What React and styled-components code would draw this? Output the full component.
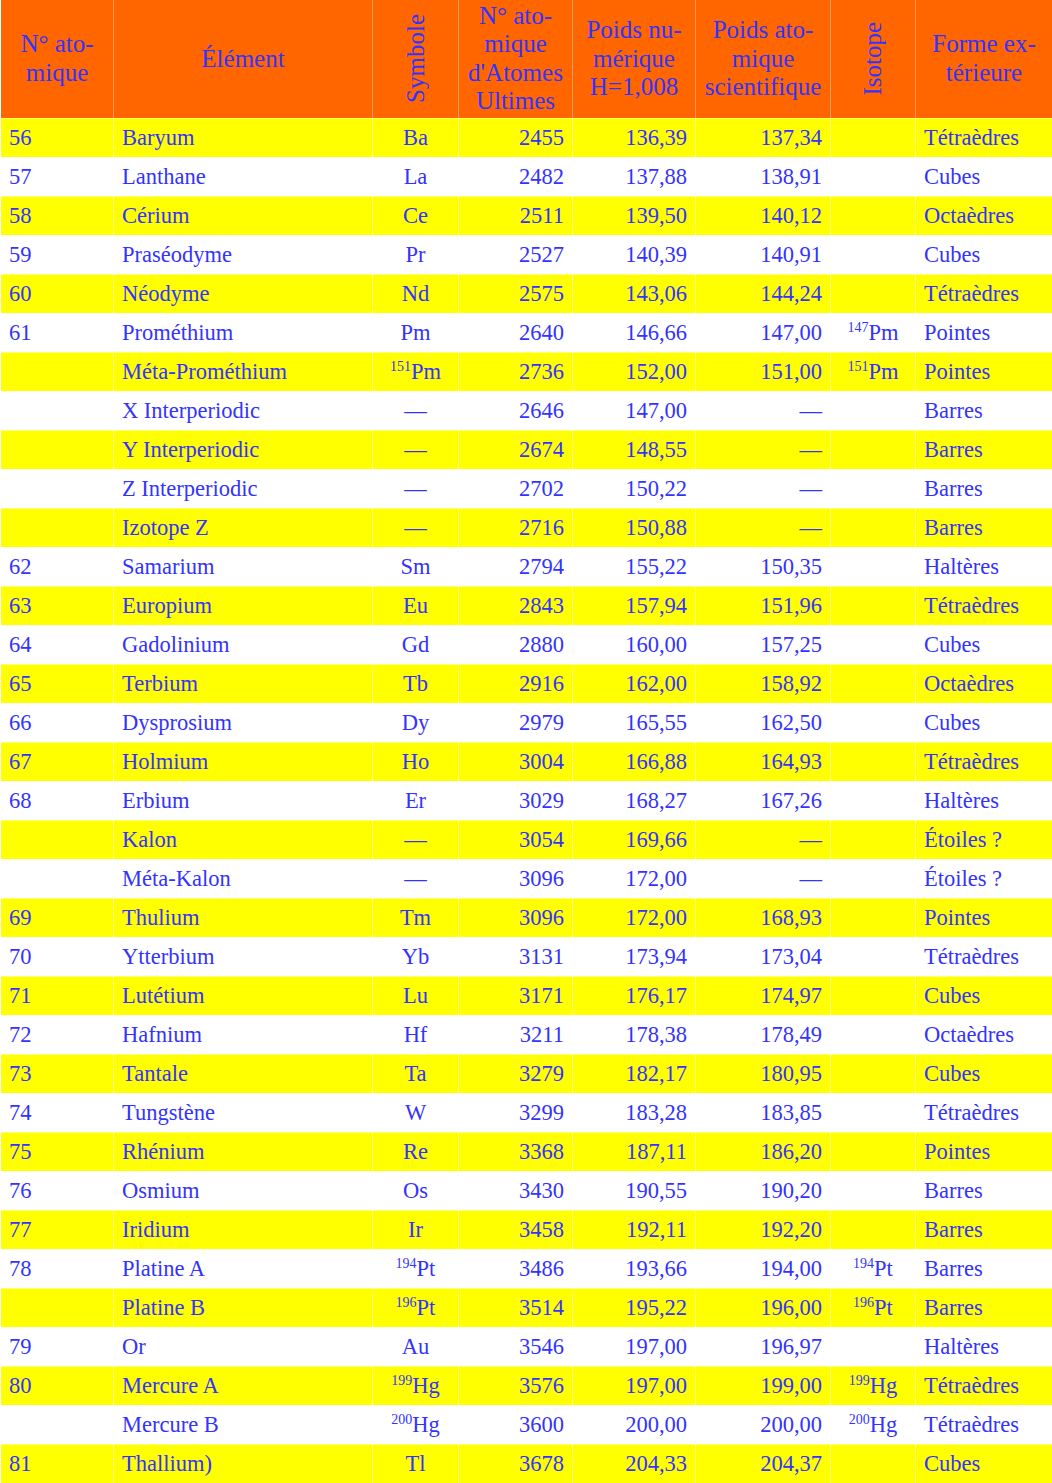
import React from 'react';
import styled, { createGlobalStyle } from 'styled-components';

const GlobalStyle = createGlobalStyle`
   html, body {
      margin: 0;
      padding: 0;
      background: #ffffff;
   }
   body {
      font-family: 'Liberation Serif', 'Times New Roman', serif;
   }
`;

// [num, name, symbol, ultimes, numerique, scientifique, isotope, forme]
// symbol / isotope: string, or [mass, sym] for a superscript isotope
const rows = [
   ['56', 'Baryum', 'Ba', '2455', '136,39', '137,34', '', 'Tétraèdres'],
   ['57', 'Lanthane', 'La', '2482', '137,88', '138,91', '', 'Cubes'],
   ['58', 'Cérium', 'Ce', '2511', '139,50', '140,12', '', 'Octaèdres'],
   ['59', 'Praséodyme', 'Pr', '2527', '140,39', '140,91', '', 'Cubes'],
   ['60', 'Néodyme', 'Nd', '2575', '143,06', '144,24', '', 'Tétraèdres'],
   ['61', 'Prométhium', 'Pm', '2640', '146,66', '147,00', ['147', 'Pm'], 'Pointes'],
   ['', 'Méta-Prométhium', ['151', 'Pm'], '2736', '152,00', '151,00', ['151', 'Pm'], 'Pointes'],
   ['', 'X Interperiodic', '—', '2646', '147,00', '—', '', 'Barres'],
   ['', 'Y Interperiodic', '—', '2674', '148,55', '—', '', 'Barres'],
   ['', 'Z Interperiodic', '—', '2702', '150,22', '—', '', 'Barres'],
   ['', 'Izotope Z', '—', '2716', '150,88', '—', '', 'Barres'],
   ['62', 'Samarium', 'Sm', '2794', '155,22', '150,35', '', 'Haltères'],
   ['63', 'Europium', 'Eu', '2843', '157,94', '151,96', '', 'Tétraèdres'],
   ['64', 'Gadolinium', 'Gd', '2880', '160,00', '157,25', '', 'Cubes'],
   ['65', 'Terbium', 'Tb', '2916', '162,00', '158,92', '', 'Octaèdres'],
   ['66', 'Dysprosium', 'Dy', '2979', '165,55', '162,50', '', 'Cubes'],
   ['67', 'Holmium', 'Ho', '3004', '166,88', '164,93', '', 'Tétraèdres'],
   ['68', 'Erbium', 'Er', '3029', '168,27', '167,26', '', 'Haltères'],
   ['', 'Kalon', '—', '3054', '169,66', '—', '', 'Étoiles ?'],
   ['', 'Méta-Kalon', '—', '3096', '172,00', '—', '', 'Étoiles ?'],
   ['69', 'Thulium', 'Tm', '3096', '172,00', '168,93', '', 'Pointes'],
   ['70', 'Ytterbium', 'Yb', '3131', '173,94', '173,04', '', 'Tétraèdres'],
   ['71', 'Lutétium', 'Lu', '3171', '176,17', '174,97', '', 'Cubes'],
   ['72', 'Hafnium', 'Hf', '3211', '178,38', '178,49', '', 'Octaèdres'],
   ['73', 'Tantale', 'Ta', '3279', '182,17', '180,95', '', 'Cubes'],
   ['74', 'Tungstène', 'W', '3299', '183,28', '183,85', '', 'Tétraèdres'],
   ['75', 'Rhénium', 'Re', '3368', '187,11', '186,20', '', 'Pointes'],
   ['76', 'Osmium', 'Os', '3430', '190,55', '190,20', '', 'Barres'],
   ['77', 'Iridium', 'Ir', '3458', '192,11', '192,20', '', 'Barres'],
   ['78', 'Platine A', ['194', 'Pt'], '3486', '193,66', '194,00', ['194', 'Pt'], 'Barres'],
   ['', 'Platine B', ['196', 'Pt'], '3514', '195,22', '196,00', ['196', 'Pt'], 'Barres'],
   ['79', 'Or', 'Au', '3546', '197,00', '196,97', '', 'Haltères'],
   ['80', 'Mercure A', ['199', 'Hg'], '3576', '197,00', '199,00', ['199', 'Hg'], 'Tétraèdres'],
   ['', 'Mercure B', ['200', 'Hg'], '3600', '200,00', '200,00', ['200', 'Hg'], 'Tétraèdres'],
   ['81', 'Thallium)', 'Tl', '3678', '204,33', '204,37', '', 'Cubes'],
];

const widths = [113, 259, 86, 114, 123, 135, 85, 137];
const aligns = ['left', 'left', 'center', 'right', 'right', 'right', 'center', 'left'];

const Iso = ({ value }) => {
   if (Array.isArray(value)) {
      return (
         <>
            <Sup>{value[0]}</Sup>
            {value[1]}
         </>
      );
   }
   return value;
};

const App = () => {
   return (
      <>
         <GlobalStyle />
         <Table>
            <colgroup>
               {widths.map((w, i) => (
                  <col key={i} style={{ width: w }} />
               ))}
            </colgroup>
            <thead>
               <tr>
                  <Th>
                     N° ato-
                     <br />
                     mique
                  </Th>
                  <Th>Élément</Th>
                  <Th>
                     <Vertical>Symbole</Vertical>
                  </Th>
                  <Th>
                     N° ato-
                     <br />
                     mique
                     <br />
                     d'Atomes
                     <br />
                     Ultimes
                  </Th>
                  <Th>
                     Poids nu-
                     <br />
                     mérique
                     <br />
                     H=1,008
                  </Th>
                  <Th>
                     Poids ato-
                     <br />
                     mique
                     <br />
                     scientifique
                  </Th>
                  <Th>
                     <Vertical>Isotope</Vertical>
                  </Th>
                  <Th>
                     Forme ex-
                     <br />
                     térieure
                  </Th>
               </tr>
            </thead>
            <tbody>
               {rows.map((r, i) => (
                  <Row key={i} $odd={i % 2 === 0}>
                     {r.map((cell, j) => (
                        <Td key={j} $align={aligns[j]}>
                           <Iso value={cell} />
                        </Td>
                     ))}
                  </Row>
               ))}
            </tbody>
         </Table>
      </>
   );
};

export default App;

const Table = styled.table`
   width: 1052px;
   table-layout: fixed;
   border-collapse: collapse;
   color: #3333ff;
   font-family: 'Liberation Serif', 'Times New Roman', serif;
`;

const Th = styled.th`
   height: 118px;
   padding: 0 3px;
   background: #ff6600;
   font-size: 25px;
   font-weight: normal;
   line-height: 28.5px;
   text-align: center;
   vertical-align: middle;
   border: 1px solid rgba(255, 255, 255, 0.35);
   border-top: none;
   box-sizing: border-box;
`;

const Vertical = styled.span`
   display: block;
   margin: 0 auto;
   width: 28px;
   writing-mode: vertical-rl;
   transform: rotate(180deg);
   line-height: 28px;
`;

const Row = styled.tr`
   height: 39px;
   background: ${(p) => (p.$odd ? '#ffff00' : '#ffffff')};
`;

const Td = styled.td`
   padding: 0 8px;
   font-size: 22.5px;
   line-height: 24px;
   text-align: ${(p) => p.$align};
   vertical-align: middle;
   white-space: nowrap;
   border: 1px solid rgba(255, 255, 255, 0.45);
   box-sizing: border-box;
`;

const Sup = styled.span`
   font-size: 14px;
   vertical-align: 0.55em;
   line-height: 0;
`;
